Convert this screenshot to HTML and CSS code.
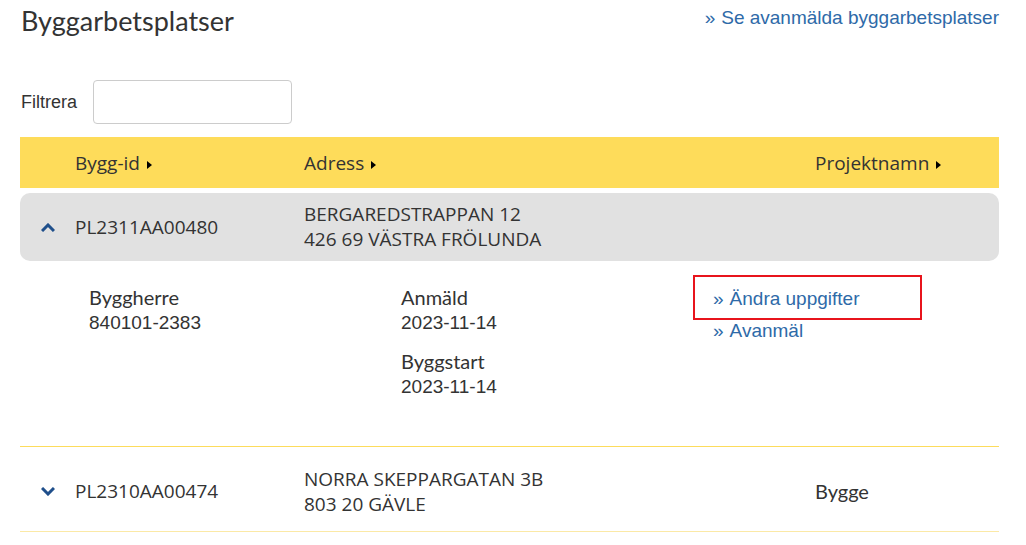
FILE: index.html
```html
<!DOCTYPE html>
<html lang="sv">
<head>
  <meta charset="UTF-8" />
  <title>Byggarbetsplatser</title>
  <link rel="stylesheet" href="styles.css">
</head>
<body>

<div class="page">
  <div class="top">
    <h1>Byggarbetsplatser</h1>
    <a class="link top-link" href="#">Se avanmälda byggarbetsplatser</a>
  </div>

  <div class="filter">
    <label for="filter">Filtrera</label>
    <input type="text" id="filter">
  </div>

  <!-- column headers -->
  <div class="row head">
    <span></span>
    <span class="sort">Bygg-id</span>
    <span class="sort">Adress</span>
    <span class="sort">Projektnamn</span>
  </div>

  <!-- expanded site -->
  <div class="row site open">
    <span class="toggle">
      <svg width="14" height="9" viewBox="0 0 14 9"><path d="M1 8 L7 2 L13 8" fill="none" stroke="#1f4f8b" stroke-width="3"/></svg>
    </span>
    <span class="bid">PL2311AA00480</span>
    <span class="addr">BERGAREDSTRAPPAN 12<br>426 69 VÄSTRA FRÖLUNDA</span>
    <span></span>
  </div>

  <div class="details">
    <div class="col">
      <div class="field">
        <div class="lbl">Byggherre</div>
        <div class="val">840101-2383</div>
      </div>
    </div>
    <div class="col">
      <div class="field">
        <div class="lbl">Anmäld</div>
        <div class="val">2023-11-14</div>
      </div>
      <div class="field">
        <div class="lbl">Byggstart</div>
        <div class="val">2023-11-14</div>
      </div>
    </div>
    <div class="col actions">
      <a class="link marked" href="#">Ändra uppgifter</a>
      <a class="link" href="#">Avanmäl</a>
    </div>
  </div>

  <div class="row site closed">
    <span class="toggle">
      <svg width="14" height="9" viewBox="0 0 14 9"><path d="M1 1 L7 7 L13 1" fill="none" stroke="#1f4f8b" stroke-width="3"/></svg>
    </span>
    <span class="bid">PL2310AA00474</span>
    <span class="addr">NORRA SKEPPARGATAN 3B<br>803 20 GÄVLE</span>
    <span class="proj">Bygge</span>
  </div>
</div>

</body>
</html>
```

FILE: styles.css
```css
body {
  margin: 0;
  background: #fff;
  color: #333;
  font-family: "Liberation Sans", Arial, sans-serif;
}
.page {
  padding: 0 27px 0 20px;
}
.top {
  display: flex;
  justify-content: space-between;
  align-items: flex-start;
}
h1 {
  font-family: Lato, sans-serif;
  font-weight: normal;
  font-size: 27px;
  line-height: 32px;
  margin: 5px 0 0 1px;
}
.link {
  color: #2e6aa8;
  text-decoration: none;
  font-size: 19px;
  line-height: 22px;
}
.link::before {
  content: "»";
  margin-right: 6px;
}
.top-link {
  margin-top: 7px;
}
.filter {
  display: flex;
  align-items: center;
  margin-top: 43px;
  font-size: 18px;
}
.filter label {
  margin-left: 1px;
  width: 72px;
}
.filter input {
  width: 199px;
  height: 44px;
  box-sizing: border-box;
  border: 1px solid #ccc;
  border-radius: 4px;
}
.row {
  display: grid;
  grid-template-columns: 55px 229px 511px 1fr;
  align-items: center;
  font-family: "Open Sans", sans-serif;
  font-size: 19px;
}
.head {
  margin-top: 13px;
  height: 51px;
  background: #fedc5a;
}
.sort::after {
  content: "";
  display: inline-block;
  margin-left: 7px;
  border-left: 5px solid #000;
  border-top: 4.5px solid transparent;
  border-bottom: 4.5px solid transparent;
  vertical-align: 1px;
}
.site {
  line-height: 25px;
}
.open {
  margin-top: 5px;
  height: 68px;
  background: #e1e1e1;
  border-radius: 10px;
}
.closed {
  box-sizing: border-box;
  height: 86px;
  padding-top: 5px;
  border-top: 1px solid #fddc5c;
  border-bottom: 1px solid #fbe9a6;
}
.toggle {
  display: flex;
  padding-left: 21px;
}
.proj {
  font-family: Lato, sans-serif;
  font-size: 20px;
}
.details {
  display: grid;
  grid-template-columns: 312px 292px 1fr;
  padding: 14px 0 0 69px;
  height: 171px;
  font-size: 19px;
  line-height: 25px;
}
.col:not(.actions) {
  padding-top: 10px;
}
.field {
  margin-bottom: 14px;
}
.lbl {
  font-family: Lato, sans-serif;
  font-size: 20px;
}
.actions {
  display: flex;
  flex-direction: column;
  align-items: flex-start;
}
.actions .link {
  padding-left: 20px;
}
.marked {
  box-sizing: border-box;
  width: 229px;
  height: 45px;
  padding-top: 11px;
  border: 2px solid #e8141c;
}
.actions .marked {
  padding-left: 18px;
}
```
